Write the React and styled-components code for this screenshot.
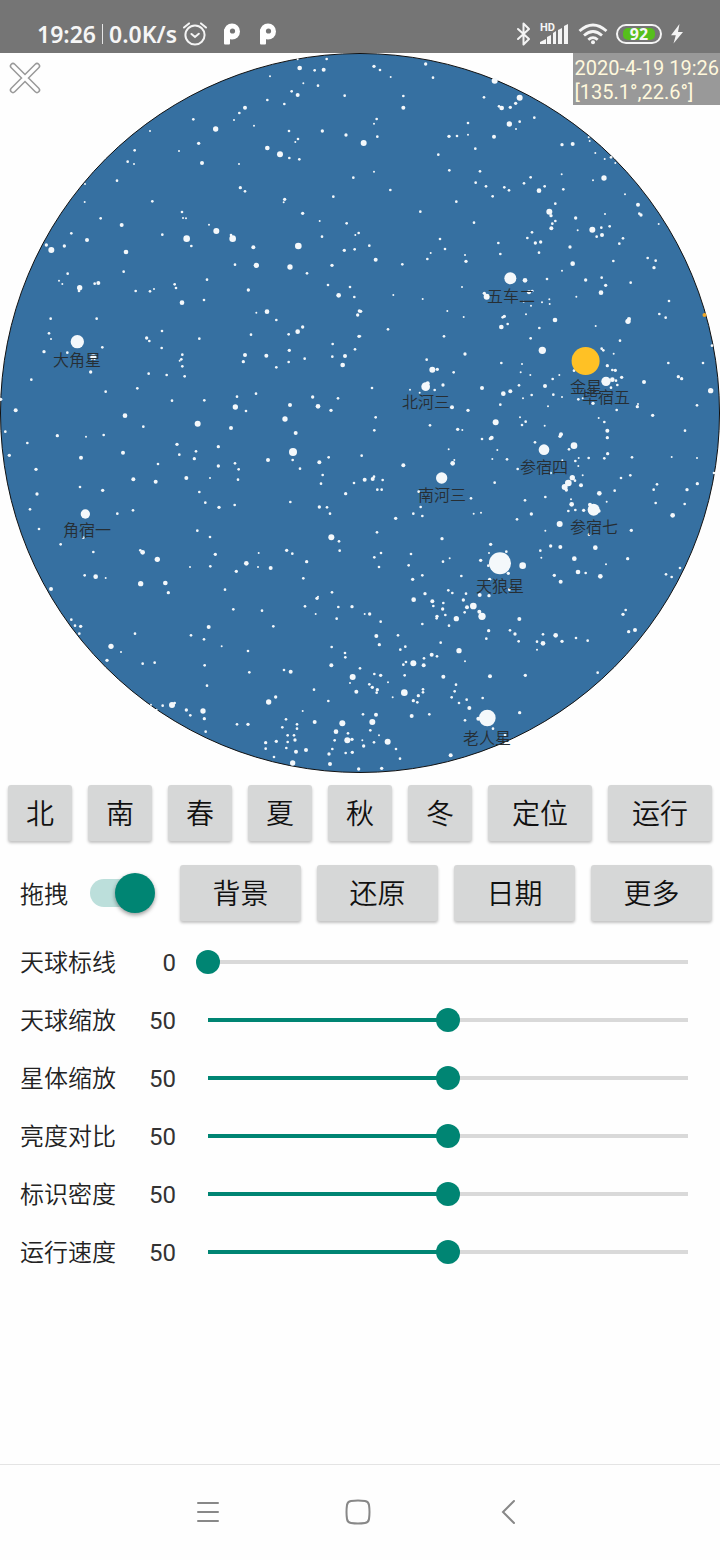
import React, { useState } from "react";
import styled, { createGlobalStyle } from "styled-components";

const CJK = '"Noto Sans CJK SC DemiLight", "Noto Sans CJK SC", sans-serif';

const GlobalStyle = createGlobalStyle`
  *, *::before, *::after { box-sizing: border-box; }
  body {
    margin: 0;
    background: #fefefe;
    color: #333;
    font-family: Roboto, "Noto Sans CJK SC", sans-serif;
  }
`;

const Page = styled.div`
  min-height: 100vh;
  display: flex;
  flex-direction: column;
`;

/* ---------- status bar ---------- */

const StatusBar = styled.header`
  height: 53px;
  padding: 14px 36px 0 37px;
  background: #757575;
  color: #f6f6f6;
  display: flex;
  align-items: center;
  justify-content: space-between;
  font-family: "Noto Sans", sans-serif;
  font-size: 23px;
  line-height: 28px;
  font-weight: 600;
`;

const StatusGroup = styled.div`
  display: flex;
  align-items: center;
  gap: ${(p) => p.$gap}px;
`;

const Divider = styled.span`
  width: 1px;
  height: 20px;
  background: #e6e6e6;
`;

const Signal = styled.div`
  display: grid;
  width: 30px;
  height: 24px;
  > * { grid-area: 1 / 1; }
`;

const HdTag = styled.span`
  font-family: Roboto, sans-serif;
  font-size: 11px;
  line-height: 12px;
  font-weight: 700;
`;

const Battery = styled.span`
  width: 46px;
  height: 20px;
  padding: 2px 5px;
  border: 2px solid #f4f4f4;
  border-radius: 10px;
  display: flex;
`;

const BatteryLevel = styled.span`
  flex: 1;
  border-radius: 5px;
  background: #56bf1c;
  display: flex;
  align-items: center;
  justify-content: center;
  font-family: "Noto Sans", sans-serif;
  font-size: 16px;
  line-height: 12px;
  font-weight: 700;
`;

/* ---------- sky chart ---------- */

const Sky = styled.main`
  display: grid;
  > * { grid-area: 1 / 1; }
`;

const Chart = styled.svg`
  display: block;
  width: 100%;
  height: auto;
`;

const StarName = styled.text`
  font-family: ${CJK};
  font-weight: 350;
  font-size: 16px;
  fill: #262e34;
  text-anchor: middle;
`;

const CloseButton = styled.button`
  align-self: start;
  justify-self: start;
  z-index: 1;
  padding: 9px;
  border: 0;
  background: none;
  display: flex;
`;

const Stamp = styled.p`
  align-self: start;
  justify-self: end;
  z-index: 1;
  margin: 0;
  padding: 3px 1px 1px;
  background: #999;
  color: #fff8dc;
  font-size: 20px;
  line-height: 24px;
  white-space: pre-line;
`;

/* ---------- controls ---------- */

const Controls = styled.section`
  display: flex;
  flex-direction: column;
  padding: 12px 8px 0;
`;

const ButtonRow = styled.div`
  display: flex;
  gap: 16px;
  margin-bottom: 24px;
`;

const KeyButton = styled.button`
  flex: ${(p) => p.$grow} 1 0;
  height: 56px;
  padding: 0 0 2px;
  border: 0;
  border-radius: 3px;
  background: #d6d7d7;
  box-shadow: 0 2px 3px rgba(0, 0, 0, 0.24);
  color: #111;
  font-family: ${CJK};
  font-weight: 350;
  font-size: 28px;
  line-height: 40px;
`;

const DragLabel = styled.label`
  flex: none;
  width: 156px;
  padding-left: 12px;
  display: flex;
  align-items: center;
  gap: 22px;
  color: #222;
  font-family: ${CJK};
  font-weight: 350;
  font-size: 24px;
  line-height: 36px;
`;

const Switch = styled.input`
  appearance: none;
  display: grid;
  align-items: center;
  width: 65px;
  height: 40px;
  margin: 0;

  &::before, &::after { content: ""; grid-area: 1 / 1; }
  &::before {
    width: 60px;
    height: 28px;
    border-radius: 14px;
    background: #bcdfdb;
  }
  &::after {
    width: 40px;
    height: 40px;
    border-radius: 50%;
    background: #008573;
    box-shadow: 0 2px 4px rgba(0, 0, 0, 0.4);
    justify-self: end;
  }
  &:not(:checked)::before { background: #bbb; }
  &:not(:checked)::after { background: #f1f1f1; justify-self: start; }
`;

const SliderList = styled.div`
  display: flex;
  flex-direction: column;
  margin-top: -12px;
  padding: 0 12px;
`;

const SliderRow = styled.div`
  display: flex;
  align-items: center;
  height: 58px;
  font-size: 24px;
  line-height: 36px;

  label {
    width: 108px;
    padding-bottom: 2px;
    color: #222;
    font-family: ${CJK};
    font-weight: 350;
  }
  output {
    width: 48px;
    margin-right: 20px;
    padding-top: 2px;
    text-align: right;
  }
`;

const Slider = styled.input`
  appearance: none;
  flex: 1;
  min-width: 0;
  height: 24px;
  margin: 0;
  background: linear-gradient(
      to right,
      #008573 ${(p) => p.value}%,
      #d9d9d9 ${(p) => p.value}%
    )
    center / calc(100% - 24px) 4px no-repeat;

  &::-webkit-slider-thumb {
    appearance: none;
    width: 24px;
    height: 24px;
    border-radius: 50%;
    background: #008573;
  }
`;

/* ---------- navigation bar ---------- */

const NavBar = styled.nav`
  margin-top: auto;
  height: 96px;
  padding: 0 4px 2px 0;
  border-top: 1px solid #e4e4e4;
  display: flex;
  justify-content: center;
`;

const NavButton = styled.button`
  width: 150px;
  padding: 0;
  border: 0;
  background: none;
  display: flex;
  align-items: center;
  justify-content: center;
`;

/* Star fields: each has an origin on the 720-unit chart; every entry is
   "x y radius" in thirds of a chart unit from that origin. */
const FIELDS = [
  {
    x: 0,
    y: -53,
    stars:
      "893 178 3;980 177 4;899 204 7;944 211 4;971 209 6;810 229 3;910 250 3;954 257 4;1034 287 4;875 274 4;893 285 6;802 300 4",
  },
  {
    x: 0,
    y: 47,
    stars:
      "735 23 6;718 39 4;702 60 3;762 77 3;853 12 4;580 58 4;647 87 8;450 93 3;596 130 5;537 153 3;404 151 4;383 185 4;402 192 3;606 189 6;717 192 3;351 242 4;255 252 3;254 306 3;457 304 4;302 355 4;365 375 6;214 400 4;261 420 6;193 438 5;139 435 5;154 450 9;203 521 4;177 542 3;187 552 3;239 563 8;237 573 4;284 551 4;295 549 6;152 656 4;290 656 4;371 515 4;378 456 7;407 573 4;450 574 4;462 567 3;524 553 4;528 564 4;546 608 7;612 600 4;621 539 4;546 336 4;549 354 3;558 355 3;487 404 4;560 416 10;574 438 4;627 374 3;649 393 9;698 416 10;693 405 4;760 442 6;705 494 4;769 496 8;745 570 5;721 263 5;735 274 4;867 93 4;894 117 4;886 126 3;802 144 7;840 163 9;868 174 4;898 178 4;967 93 5;1038 105 5;1060 233 4;1000 290 4;854 298 5;851 307 3;908 340 5;959 363 3;1040 370 4;966 410 4;1076 399 4;1066 405 3;895 438 10;1033 451 5;1064 448 4;870 501 8;996 496 5;921 520 4;984 555 4;1050 561 4;1016 586 7;1063 591 4;769 638 3;801 635 7;829 660 4;908 681 5;1078 633 5;1073 645 5",
  },
  {
    x: 360,
    y: -3,
    stars:
      "42 49 5;60 60 4;92 81 3;197 42 5;219 83 4;404 92 9;372 142 4;479 143 9;467 160 5;451 172 5;425 174 7;417 169 4;130 138 4;130 173 6;50 207 4;42 221 3;52 260 4;11 279 9;448 222 8;479 215 4;468 237 3;523 203 4;402 260 6;324 219 4;324 254 3;267 259 5;291 258 4;346 296 4;235 314 4;606 284 5;638 282 6;686 262 3;689 273 3;706 309 3;734 327 3;753 322 4;766 339 3;268 361 4;360 364 4;347 398 4;378 409 4;398 439 4;433 412 4;447 421 4;492 400 4;512 382 4;537 422 7;554 409 4;605 373 3;610 418 4;732 384 8;699 391 3;795 433 3;834 464 6;843 495 5;838 491 4;896 522 3;289 455 4;91 420 4;42 365 3;181 485 4;342 518 4;586 461 4;568 485 9;573 497 5;586 513 4;577 521 4;574 535 6;647 504 5;653 541 3;697 539 9;724 533 4;726 555 6;710 560 4;749 529 4;735 492 3;789 565 4;778 581 4;516 547 4;502 564 4;526 579 5;542 576 5;537 608 4;630 591 5;415 579 4;421 612 4;240 567 4;255 597 4;212 609 3;202 627 4;315 615 3;318 634 5;28 587 4;47 629 6;127 643 4;638 641 7;760 633 4;606 662 3;863 624 4;887 632 4;882 653 5;812 698 4;451 685 18;495 691 7;561 687 4;677 690 5;725 683 4;737 706 5;723 728 7;649 740 3;306 711 3;380 740 9;373 730 5;507 727 6;517 723 4;100 735 3;188 747 3",
  },
  {
    x: 360,
    y: 237,
    stars:
      "568 28 3;569 42 3;546 37 3;513 47 3;491 35 3;2 64 5;262 63 3;84 118 4;1 139 3;252 139 4;311 81 3;315 192 5;200 209 4;217 239 9;232 238 5;281 247 4;197 290 13;203 280 6;249 285 5;224 300 4;150 299 3;179 308 3;36 294 4;276 352 6;324 361 5;210 406 4;293 418 5;307 420 3;47 382 4;43 421 4;266 478 3;278 520 7;283 510 3;5 497 4;130 526 6;14 569 6;38 567 6;42 560 4;68 570 4;52 599 4;65 599 4;245 564 17;176 605 4;182 651 4;333 625 4;107 685 5;160 671 4;187 678 4;341 671 3;363 668 3;51 727 4;366 294 6;430 311 7;451 304 6;421 344 4;477 286 4;424 219 4;486 222 3;482 247 3;511 255 3;578 267 4;598 255 3;642 242 4;555 288 6;515 315 4;489 325 3;580 314 4;606 321 3;564 349 3;547 181 11;512 145 4;424 111 7;443 102 4;433 79 5;428 82 4;498 73 3;538 114 4;585 90 7;804 94 8;807 87 6;707 108 3;780 152 4;898 72 4;917 83 4;927 33 4;1056 167 4;1029 219 4;925 219 4;955 260 5;965 266 5;852 276 6;1052 302 8;1011 346 4;878 376 5;832 350 5;834 342 3;770 360 4;725 176 4;730 181 4;761 191 3;742 227 5;757 240 4;766 241 5;738 274 14;757 269 7;768 272 4;785 262 5;772 285 4;753 293 4;699 340 5;655 328 4;668 325 3;407 397 9;480 382 3;497 395 4;486 405 4;554 407 3;395 443 6;391 446 5;366 447 4;412 480 3;397 507 3;441 508 4;525 457 4;603 433 6;600 439 5;552 479 16;642 467 10;627 478 4;716 384 3;733 396 4;742 422 6;742 443 5;743 491 5;733 505 4;686 504 4;656 504 3;646 513 4;655 528 3;607 511 3;473 537 4;572 549 4;816 502 4;935 501 3;1011 504 3;975 422 4;1062 549 4;811 556 4;783 564 4;668 556 3;637 563 8;645 572 4;625 579 10;614 591 9;619 600 5;663 586 6;718 610 7;764 602 4;891 583 4;881 599 4;887 639 4;1012 581 5;981 599 5;974 642 4;938 676 7;740 635 3;633 628 3;635 643 7;625 663 4;646 660 4;671 661 5;701 659 18;690 644 6;717 663 5;556 621 4;495 631 4;404 578 4;514 672 5;471 688 4;599 702 9;556 722 3;814 721 5;687 734 4",
  },
  {
    x: 0,
    y: 267,
    stars:
      "147 40 4;153 57 3;132 95 5;232 65 20;307 82 4;202 98 4;280 112 9;272 156 5;94 179 4;317 215 4;2 238 5;47 271 6;16 335 4;82 369 4;28 406 5;172 347 5;258 350 3;311 345 4;243 413 6;108 448 5;240 501 4;308 511 5;111 522 5;90 568 4;256 582 14;117 627 4;250 653 4;182 673 4;352 581 4;399 571 4;375 287 7;412 205 4;446 161 4;430 320 4;369 398 6;400 478 6;467 485 6;474 432 4;440 54 5;448 63 4;486 33 4;485 84 4;500 165 4;554 169 4;547 139 4;547 104 4;544 118 4;539 122 3;516 242 4;613 241 4;598 56 4;593 311 9;531 373 5;538 404 4;588 394 4;583 416 5;559 474 6;598 516 4;616 548 4;630 474 3;592 632 4;630 651 4;655 380 5;655 438 5;705 430 4;716 448 4;714 479 4;704 555 4;657 562 5;693 324 6;706 261 8;738 273 4;711 230 4;768 221 4;753 44 4;735 105 6;730 125 5;799 107 6;829 142 4;866 126 4;868 91 5;866 43 4;893 35 7;914 116 4;998 72 4;997 110 4;1035 108 6;1028 135 7;1065 88 4;1077 49 5;870 255 6;855 297 8;887 339 6;879 396 12;878 420 4;900 446 4;804 420 6;938 231 5;954 259 7;1014 235 4;993 271 5;958 427 6;986 412 4;968 465 4;963 491 4;1062 489 4;1037 521 5;871 546 4;958 561 5;981 562 4;990 581 4;994 652 9;1017 664 4",
  },
  {
    x: 0,
    y: 487,
    stars:
      "280 36 4;428 37 7;421 31 4;472 58 8;254 106 4;287 110 7;317 114 3;422 131 8;496 129 7;505 158 5;153 147 6;214 239 4;225 257 4;242 259 5;238 281 4;405 281 4;333 319 8;363 336 3;321 361 5;428 371 4;464 368 4;646 43 5;631 79 4;570 81 3;675 149 4;709 94 5;739 70 7;774 81 3;776 39 3;812 84 6;860 31 5;877 41 4;920 65 5;1019 32 4;910 115 4;700 208 4;786 212 4;820 259 4;626 261 6;612 298 4;573 286 4;665 319 3;744 333 4;614 376 4;748 397 4;621 437 4;996 157 4;951 175 5;954 170 3;915 199 4;947 222 3;1015 201 4;1056 200 5;1010 236 4;995 321 4;1035 339 4;1036 352 4;994 376 6;1058 411 9;1050 429 3;1069 455 6;852 390 4;872 395 6;942 449 4;985 483 4;908 513 3;806 486 8;827 471 5;453 494 3;470 509 3;488 497 4;516 495 9;524 489 4;559 510 5;571 526 4;609 513 8;613 536 5;617 575 4;711 553 4;744 553 5;858 538 4;847 562 4;891 553 4;891 566 4;863 586 4;882 586 4;885 600 5;863 606 4;859 624 4;829 604 5;797 608 5;797 626 4;822 651 4;888 635 6;918 630 6;878 669 8;944 546 6;1027 550 9;1008 575 7;1044 580 4;1042 601 9;1056 598 5;1004 601 4;997 627 4;987 642 5;1037 639 4;1057 637 5;990 672 6;1076 687 5",
  },
  {
    x: 360,
    y: 477,
    stars:
      "63 69 4;43 82 4;57 111 4;153 72 4;146 106 4;246 26 5;269 85 3;249 95 4;187 136 4;158 148 5;304 138 4;392 43 5;387 69 3;439 65 4;362 91 5;385 107 4;420 100 33;445 130 5;488 107 10;389 148 5;195 191 5;265 181 4;277 189 4;318 191 4;359 195 6;387 197 5;448 179 4;161 209 7;217 214 6;220 228 4;250 219 4;248 237 5;256 255 4;231 259 5;230 265 4;267 287 4;289 266 8;310 210 5;321 232 6;314 247 4;340 228 10;366 259 11;358 245 6;14 252 3;29 252 5;62 275 4;187 282 4;49 318 6;58 344 5;114 316 4;136 350 4;121 359 4;242 338 4;215 374 6;231 379 4;297 362 8;192 385 4;160 400 9;191 406 6;138 396 4;130 404 4;315 394 3;0 415 4;43 432 4;62 436 5;84 457 3;134 436 4;28 463 4;37 472 5;52 479 5;50 488 4;133 488 10;98 502 3;189 478 4;189 487 4;175 497 5;160 512 5;172 517 4;250 440 6;390 439 6;288 464 4;284 484 4;275 502 4;297 519 4;320 509 4;368 504 4;328 534 6;315 571 4;479 548 5;496 436 5;382 564 25;355 566 6;399 596 4;435 615 4;272 676 6;9 553 4;48 554 6;37 576 9;31 601 4;57 616 3;7 631 3;42 637 4;11 648 5;83 635 9;108 657 4;120 686 4;65 715 5;155 558 6;208 553 4;478 267 6;450 301 4;465 312 5;476 334 4;386 302 5;379 326 4;531 335 4;531 359 3;549 313 4;549 340 7;587 316 7;606 334 5;648 324 4;683 332 4;713 428 4;789 253 5;797 240 4;806 305 5;825 300 6;583 136 5;602 155 6;541 62 4;544 83 3;572 48 5;601 51 6;643 86 7;654 126 7;677 129 4;706 53 7;721 139 7;738 103 3;803 86 5;918 133 4;935 141 4;960 114 4",
  },
].map((f) => ({ ...f, stars: f.stars.split(";").map((s) => s.split(" ").map(Number)) }));

const NAMES = [
  ["大角星", 77, 313],
  ["角宿一", 87, 483],
  ["五车二", 511, 249],
  ["金星", 586, 340],
  ["毕宿五", 606, 350],
  ["北河三", 426, 355],
  ["参宿四", 544, 420],
  ["南河三", 442, 448],
  ["参宿七", 594, 480],
  ["天狼星", 500, 539],
  ["老人星", 487, 691],
];

const PRESETS = ["北", "南", "春", "夏", "秋", "冬", "定位", "运行"];
const ACTIONS = ["背景", "还原", "日期", "更多"];
const SLIDERS = [
  ["天球标线", 0],
  ["天球缩放", 50],
  ["星体缩放", 50],
  ["亮度对比", 50],
  ["标识密度", 50],
  ["运行速度", 50],
];

const AlarmIcon = () => (
  <svg width="24" height="24" viewBox="0 0 24 24" fill="none" stroke="#f4f4f4" strokeWidth="2" strokeLinecap="round">
    <circle cx="12" cy="13" r="9.6" />
    <path d="M8.5 12l3.5 3 3.8-3.3M1 5.5L6 1.4M23 5.5L18 1.4" />
  </svg>
);

const ParkingIcon = () => (
  <svg width="18" height="22" viewBox="0 0 18 22">
    <rect x="1" y="6" width="6" height="15.5" rx="1" fill="#fff" />
    <circle cx="9" cy="8.500" r="8" fill="#fff" />
    <circle cx="9.5" cy="8" r="2.6" fill="#757575" />
  </svg>
);

const BluetoothIcon = () => (
  <svg width="16" height="24" viewBox="0 0 16 24" fill="none" stroke="#f4f4f4" strokeWidth="2" strokeLinejoin="round" strokeLinecap="round">
    <path d="M2 7l11 10-5.5 5.5V1.5L13 7 2 17" />
  </svg>
);

const SignalBars = () => (
  <svg width="30" height="24" viewBox="0 0 30 24" fill="#f4f4f4">
    <path d="M0 22v-2l6-3v5z" />
    <path d="M7 22v-7l4-2v9z" />
    <path d="M13 22V11l3-2v13z" />
    <path d="M18 22V8l4-2v16z" />
    <path d="M24 22V4l4-2v20z" />
  </svg>
);

const WifiIcon = () => (
  <svg width="30" height="22" viewBox="0 0 30 22" fill="none" stroke="#f4f4f4" strokeWidth="2.8">
    <path d="M1.5 8Q15-4 28.500 8M6 12.500Q15 4.500 24 12.500M10.300 16.700Q15 12.600 19.700 16.700" />
    <circle cx="15" cy="19.200" r="2" fill="#f4f4f4" stroke="none" />
  </svg>
);

const BoltIcon = () => (
  <svg width="14" height="20" viewBox="0 0 14 20" fill="#f4f4f4">
    <path d="M9.500 0L1 11.200h4.800L3.500 19.500 13 8H8z" />
  </svg>
);

const CloseIcon = () => (
  <svg width="32" height="32" viewBox="0 0 32 32" strokeLinecap="round">
    <path d="M4 4l24 24M28 4L4 28" stroke="#999" strokeWidth="6.500" />
    <path d="M4 4l24 24M28 4L4 28" stroke="#fff" strokeWidth="3.500" />
  </svg>
);

function SkyChart() {
  return (
    <Chart viewBox="0 0 720 720" role="img" aria-label="星图">
      <circle cx="360" cy="360" r="359.5" fill="#3670a1" stroke="#111" />
      {FIELDS.map((f, i) => (
        <g key={i} transform={`translate(${f.x} ${f.y}) scale(0.33333)`} fill="#f4f8fb">
          {f.stars.map(([x, y, r], k) => (
            <circle key={k} cx={x} cy={y} r={r} />
          ))}
        </g>
      ))}
      <circle cx="585.600" cy="308" r="14" fill="#ffc125" />
      <circle cx="704.500" cy="262" r="2" fill="#f0a828" />
      {NAMES.map(([name, x, y]) => (
        <StarName key={name} x={x} y={y}>
          {name}
        </StarName>
      ))}
    </Chart>
  );
}

export default function App() {
  const [dragging, setDragging] = useState(true);
  const [values, setValues] = useState(SLIDERS.map(([, v]) => v));
  const setValue = (i, v) => setValues((old) => old.map((o, k) => (k === i ? v : o)));

  return (
    <Page>
      <GlobalStyle />
      <StatusBar>
        <StatusGroup $gap={16}>
          <StatusGroup $gap={6}>
            <span>19:26</span>
            <Divider />
            <span>0.0K/s</span>
            <AlarmIcon />
          </StatusGroup>
          <StatusGroup $gap={18}>
            <ParkingIcon />
            <ParkingIcon />
          </StatusGroup>
        </StatusGroup>
        <StatusGroup $gap={8}>
          <BluetoothIcon />
          <Signal>
            <SignalBars />
            <HdTag>HD</HdTag>
          </Signal>
          <WifiIcon />
          <Battery>
            <BatteryLevel>92</BatteryLevel>
          </Battery>
          <BoltIcon />
        </StatusGroup>
      </StatusBar>

      <Sky>
        <SkyChart />
        <CloseButton aria-label="关闭">
          <CloseIcon />
        </CloseButton>
        <Stamp>{"2020-4-19 19:26\n[135.1°,22.6°]"}</Stamp>
      </Sky>

      <Controls>
        <ButtonRow>
          {PRESETS.map((t) => (
            <KeyButton key={t} $grow={t.length > 1 ? 104 : 64}>
              {t}
            </KeyButton>
          ))}
        </ButtonRow>
        <ButtonRow>
          <DragLabel>
            拖拽
            <Switch
              type="checkbox"
              role="switch"
              checked={dragging}
              onChange={(e) => setDragging(e.target.checked)}
            />
          </DragLabel>
          {ACTIONS.map((t) => (
            <KeyButton key={t} $grow={1}>
              {t}
            </KeyButton>
          ))}
        </ButtonRow>
        <SliderList>
          {SLIDERS.map(([name], i) => (
            <SliderRow key={name}>
              <label htmlFor={`slider-${i}`}>{name}</label>
              <output htmlFor={`slider-${i}`}>{values[i]}</output>
              <Slider
                id={`slider-${i}`}
                type="range"
                min="0"
                max="100"
                value={values[i]}
                onChange={(e) => setValue(i, Number(e.target.value))}
              />
            </SliderRow>
          ))}
        </SliderList>
      </Controls>

      <NavBar>
        <NavButton aria-label="菜单">
          <svg width="24" height="24" viewBox="0 0 24 24" stroke="#888" strokeWidth="2" strokeLinecap="round">
            <path d="M2 3h20M2 12h20M2 21h20" />
          </svg>
        </NavButton>
        <NavButton aria-label="主页">
          <svg width="26" height="26" viewBox="0 0 26 26" fill="none" stroke="#888" strokeWidth="2">
            <path d="M6 2Q13 1 20 2Q23.500 2.500 24 6Q25 13 24 20Q23.500 23.500 20 24Q13 25 6 24Q2.500 23.500 2 20Q1 13 2 6Q2.500 2.500 6 2Z" />
          </svg>
        </NavButton>
        <NavButton aria-label="返回">
          <svg width="16" height="26" viewBox="0 0 16 26" fill="none" stroke="#888" strokeWidth="2" strokeLinecap="round">
            <path d="M14 2L3 13l11 11" />
          </svg>
        </NavButton>
      </NavBar>
    </Page>
  );
}
